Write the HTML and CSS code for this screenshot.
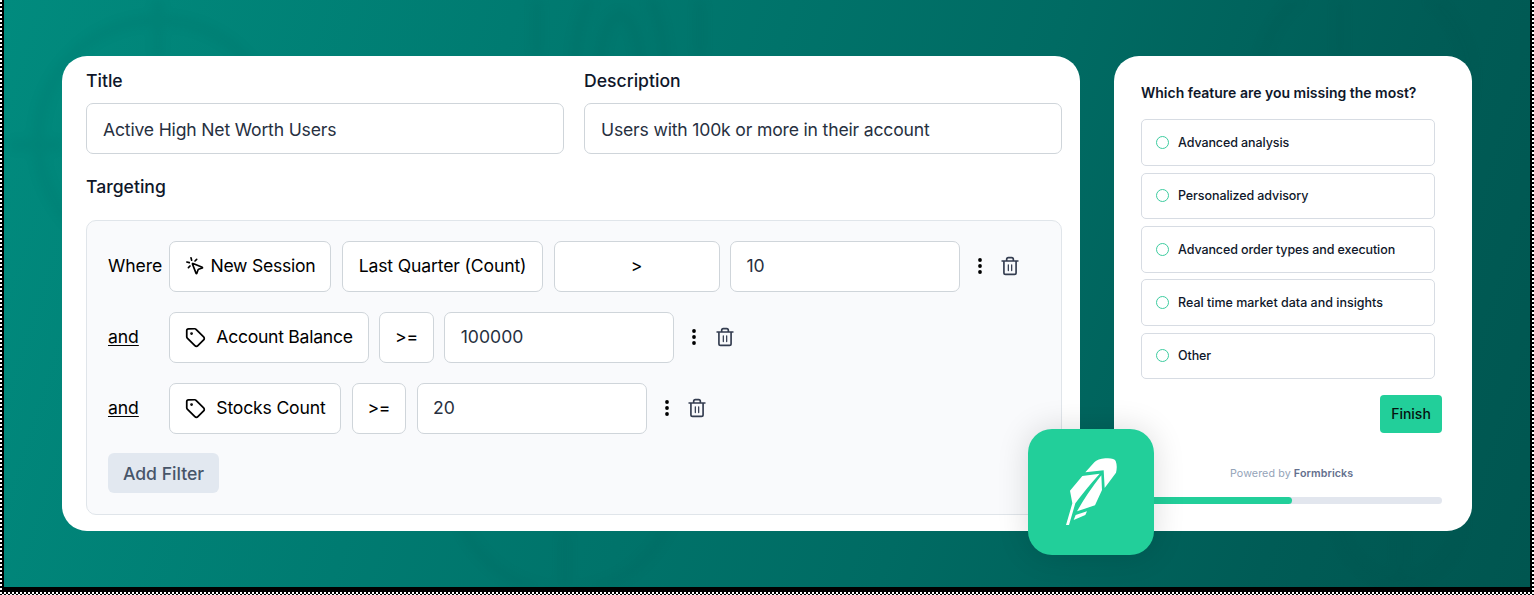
FILE: index.html
```html
<!DOCTYPE html>
<html lang="en">
<head>
<meta charset="utf-8">
<title>Targeting</title>
<link rel="stylesheet" href="styles.css">
</head>
<body>
<svg class="symbols" width="0" height="0">
  <symbol id="tag" viewBox="0 0 24 24"><path d="M12.6 2.6A2 2 0 0 0 11.2 2H4a2 2 0 0 0-2 2v7.2a2 2 0 0 0 .6 1.4l8.7 8.7a2.4 2.4 0 0 0 3.4 0l6.6-6.6a2.4 2.4 0 0 0 0-3.4z"/><circle cx="7.5" cy="7.5" r=".6" fill="currentColor"/></symbol>
  <symbol id="click" viewBox="0 0 24 24"><path d="M14 4.1 12 6M5.1 8l-2.9-.8M6 12l-1.900 2M7.200 2.200 8 5.100M9 9.700a.5.500 0 0 1 .7-.7l11 4.500a.5.500 0 0 1 0 .9l-4.400 1.500a1 1 0 0 0-.6.600l-1.500 4.300a.5.500 0 0 1-.9 0z"/></symbol>
  <symbol id="trash" viewBox="0 0 24 24"><path d="M2.500 6h19M19.300 6v14a2 2 0 0 1-2 2H6.700a2 2 0 0 1-2-2V6M8 6V4a2 2 0 0 1 2-2h4a2 2 0 0 1 2 2v2"/><path class="thin" d="M10 10.500v7M14 10.500v7"/></symbol>
  <symbol id="dots" viewBox="0 0 6 18"><circle cx="3" cy="3" r="1.900"/><circle cx="3" cy="9" r="1.900"/><circle cx="3" cy="15" r="1.900"/></symbol>
</svg>
<div class="frame">
<main class="stage">
  <svg class="pattern" width="1526" height="587" viewBox="4 0 1526 587">
    <g>
      <circle cx="158" cy="140" r="120"/><path d="M158 0v56M10 145h52"/>
      <ellipse cx="620" cy="70" rx="45" ry="95"/><ellipse cx="620" cy="70" rx="20" ry="55"/><path d="M537 0v56M700 0v56"/>
      <circle cx="565" cy="480" r="112"/><path d="M565 531v56M1340 0v56M1400 531v56"/>
      <circle cx="1365" cy="80" r="105"/><circle cx="1400" cy="520" r="60"/>
    </g>
  </svg>
  <section class="segment">
    <div class="fields">
      <label class="field">Title<span class="input">Active High Net Worth Users</span></label>
      <label class="field">Description<span class="input">Users with 100k or more in their account</span></label>
    </div>
    <h2 class="heading">Targeting</h2>
    <div class="filters">
      <div class="row">
        <span class="join">Where</span>
        <span class="box session"><svg class="icon cursor"><use href="#click"/></svg><span>New Session</span></span>
        <span class="box quarter"><span>Last Quarter (Count)</span></span>
        <span class="box compare">&gt;</span>
        <span class="box value">10</span>
        <svg class="dots"><use href="#dots"/></svg><svg class="icon trash"><use href="#trash"/></svg>
      </div>
      <div class="row">
        <span class="join and">and</span>
        <span class="box balance"><svg class="icon"><use href="#tag"/></svg><span>Account Balance</span></span>
        <span class="box op">&gt;=</span>
        <span class="box value">100000</span>
        <svg class="dots"><use href="#dots"/></svg><svg class="icon trash"><use href="#trash"/></svg>
      </div>
      <div class="row">
        <span class="join and">and</span>
        <span class="box stocks"><svg class="icon"><use href="#tag"/></svg><span>Stocks Count</span></span>
        <span class="box op">&gt;=</span>
        <span class="box value">20</span>
        <svg class="dots"><use href="#dots"/></svg><svg class="icon trash"><use href="#trash"/></svg>
      </div>
      <button class="add">Add Filter</button>
    </div>
  </section>
  <section class="survey">
    <h3 class="question">Which feature are you missing the most?</h3>
    <div class="options">
      <div class="option"><i class="radio"></i><span>Advanced analysis</span></div>
      <div class="option"><i class="radio"></i><span>Personalized advisory</span></div>
      <div class="option"><i class="radio"></i><span>Advanced order types and execution</span></div>
      <div class="option"><i class="radio"></i><span>Real time market data and insights</span></div>
      <div class="option"><i class="radio"></i><span>Other</span></div>
    </div>
    <button class="finish">Finish</button>
    <p class="powered">Powered by <b>Formbricks</b></p>
    <div class="track"><div class="bar"></div></div>
  </section>
  <div class="badge">
    <svg width="126" height="126" viewBox="84 87 378 378"><path d="M256 217 283 187Q293 177 316 175Q342 173 347 183Q353 199 348 218L314 264 311 211ZM247 228 299 221Q255 270 226 310L207 375H198L217 310 210 272ZM304 226 306 270 285 316 231 334Q260 282 304 226ZM227 345 261 334 256 345 221 360Z"/></svg>
  </div>
</main>
</div>
</body>
</html>
```
FILE: styles.css
```css
* { box-sizing: border-box; }
body { margin: 0; font-family: Inter, sans-serif; color: #0f172a; background: #fff; }
button { border: 0; font-family: inherit; padding: 0; }
h2, h3, p { margin: 0; }
.symbols { display: block; }
.frame { width: 1534px; height: 595px; padding: 0 2px 3px; overflow: hidden; background: repeating-conic-gradient(#000 0 25%, #fff 0 50%) 0 0 / 4px 4px; }
.stage { position: relative; width: 1530px; height: 592px; display: flex; gap: 34px; align-items: flex-start; padding: 56px 56px 0 58px; border: solid #000; border-width: 0 2px 5px; background: linear-gradient(108deg, #018b7e 0%, #007b71 30%, #006b63 62%, #005c56 84%, #005650 100%); }
.pattern { position: absolute; left: 0; top: 0; fill: none; stroke: #00423d; stroke-width: 12; opacity: .06; filter: blur(5px); }
.segment { position: relative; width: 1018px; height: 475px; border-radius: 25px; background: #fff; padding: 14px 18px 0 24px; flex: none; }
.fields { display: flex; gap: 20px; }
.field { width: 478px; font-size: 17.6px; font-weight: 500; line-height: 22px; display: flex; flex-direction: column; gap: 11px; }
.input { height: 51px; border: 1px solid #cfd5da; border-radius: 7px; padding: 1px 16px 0; font-weight: 400; font-size: 17.6px; letter-spacing: -.18px; line-height: 50px; color: #27303f; }
.heading { margin-top: 22px; font-size: 17.6px; font-weight: 500; line-height: 22px; }
.filters { margin-top: 22px; width: 976px; height: 295px; border: 1px solid #e0e5ea; border-radius: 10px; background: #f9fafc; padding: 20px 20px 0 21px; display: flex; flex-direction: column; gap: 20px; align-items: flex-start; }
.row { display: flex; align-items: center; height: 50.8px; color: #000; font-size: 17.6px; letter-spacing: -.08px; line-height: 22px; }
.join { width: 60.8px; }
.and { text-decoration: underline; text-underline-offset: 2px; }
.box { height: 51px; border: 1px solid #cfd5da; border-radius: 7px; background: #fff; margin-right: 10.4px; display: flex; align-items: center; justify-content: center; flex: none; }
.session { width: 162.6px; gap: 5px; justify-content: flex-start; padding-left: 15.6px; letter-spacing: -.25px; }
.quarter { width: 201.4px; letter-spacing: -.15px; }
.compare { width: 166px; }
.value { width: 230px; justify-content: flex-start; padding-left: 15.5px; color: #27303f; margin-right: 17px; letter-spacing: 0; }
.balance { width: 200px; gap: 10px; justify-content: flex-start; padding-left: 15.5px; letter-spacing: -.28px; }
.stocks { width: 172.4px; gap: 10px; justify-content: flex-start; padding-left: 15.5px; letter-spacing: -.18px; }
.op { width: 54.6px; letter-spacing: -.2px; }
.icon { width: 21px; height: 21px; fill: none; stroke: currentColor; stroke-width: 2; stroke-linecap: round; stroke-linejoin: round; flex: none; }
.cursor { width: 20px; height: 20px; }
.trash { width: 20px; height: 22px; color: #343d50; margin-left: 17.5px; }
.thin { stroke-width: 1.5; }
.dots { width: 6px; height: 18px; fill: #000; }
.add { width: 111px; height: 40px; border-radius: 6px; background: #e2e8f0; color: #475569; font-size: 17.6px; font-weight: 500; }
.survey { position: relative; width: 358px; height: 475px; border-radius: 25px; background: #fff; padding: 27px 30px 0 27px; flex: none; display: flex; flex-direction: column; }
.question { font-size: 14px; font-weight: 600; line-height: 20px; white-space: nowrap; }
.options { margin-top: 16.4px; display: flex; flex-direction: column; gap: 6.7px; width: 294px; }
.option { height: 46.6px; border: 1px solid #d7dce3; border-radius: 5px; display: flex; align-items: center; gap: 9px; padding-left: 14px; font-size: 12.5px; letter-spacing: -.09px; font-weight: 500; }
.option:nth-child(4) { letter-spacing: 0; }
.radio { width: 13px; height: 13px; border: 1px solid #3dcc9f; border-radius: 50%; }
.finish { align-self: flex-end; margin-top: 15.8px; width: 62px; height: 38px; border-radius: 4px; background: #22cf9a; color: #06130f; font-size: 14px; font-weight: 500; }
.powered { margin-top: 34px; padding-left: 89px; font-size: 10.7px; letter-spacing: .1px; line-height: 14px; color: #94a3b8; white-space: nowrap; }
.powered b { font-weight: 600; color: #64708e; }
.track { margin-top: 16px; height: 7px; border-radius: 4px; background: #e2e6ee; overflow: hidden; }
.bar { width: 50%; height: 7px; border-radius: 4px; background: #22cf9a; }
.badge { position: absolute; left: 1024px; top: 429px; width: 126px; height: 126px; border-radius: 24px; background: #22cf9a; box-shadow: 0 0 32px rgba(0,0,0,.14); }
.badge svg { display: block; fill: #fff; }
```
